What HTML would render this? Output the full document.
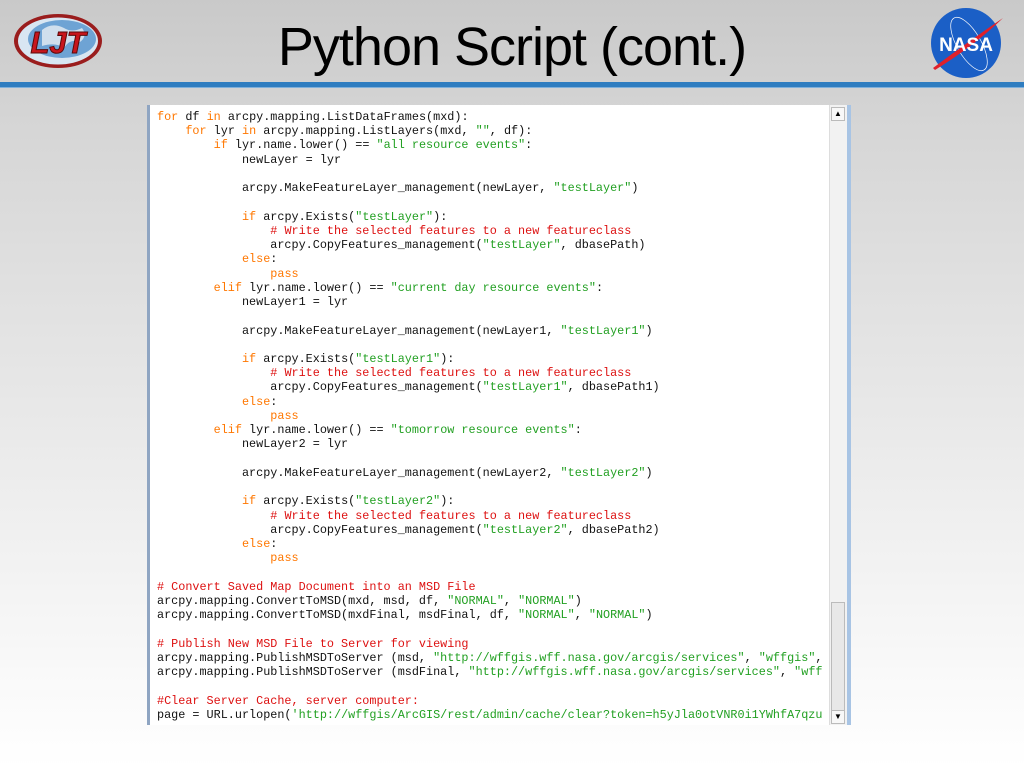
<!DOCTYPE html>
<html><head><meta charset="utf-8"><style>
html,body{margin:0;padding:0}
body{width:1024px;height:768px;position:relative;overflow:hidden;background:linear-gradient(#c9c9c9 0px,#d6d6d6 130px,#eeeeee 500px,#ffffff 768px);font-family:"Liberation Sans",sans-serif}
.title{position:absolute;left:0;width:1024px;top:16px;text-align:center;font-size:54px;color:#000;font-family:"Liberation Sans Narrow","Liberation Sans",sans-serif;letter-spacing:-1px}
.bar{position:absolute;left:0;top:82px;width:1024px;height:5px;background:#2f7dc0;border-bottom:1px solid #7fb0db}
.box{position:absolute;left:147px;top:105px;width:704px;height:620px;background:#fff;border-left:3px solid #8fa5c2;border-right:4px solid #a8c4e4;box-sizing:border-box;overflow:hidden}
pre{position:absolute;left:7px;top:5px;margin:0;font-family:"Liberation Mono",monospace;font-size:11.8px;line-height:14.24px;color:#111;white-space:pre}
.k{color:#ff7700}.s{color:#22a022}.c{color:#dd1111}
.sb{position:absolute;right:0;top:0;width:17px;height:620px;background:#f2f2f2;border-left:1px solid #ddd}
.thumb{position:absolute;left:1px;top:497px;width:14px;height:110px;background:#e8e8e8;border:1px solid #bbb;box-sizing:border-box}
.ar{position:absolute;left:1px;width:14px;height:14px;background:#f8f8f8;border:1px solid #bbb;box-sizing:border-box;font-size:8px;text-align:center;line-height:12px}
</style></head><body>
<svg style="position:absolute;left:12px;top:12px" width="92" height="58" viewBox="0 0 92 58">
<ellipse cx="46" cy="29" rx="44" ry="27" fill="#9a1d1d"/>
<ellipse cx="46" cy="29" rx="40" ry="23.5" fill="#d8e6f2"/>
<ellipse cx="50" cy="27" rx="34" ry="19" fill="#6ea3d4"/>
<path d="M30 18 q10 -8 22 -2 q8 5 18 0 q6 8 -2 14 q-10 -4 -16 6 q-8 -6 -22 -2z" fill="#e9eef2" opacity="0.8"/>
<text x="46" y="41" text-anchor="middle" font-family="Liberation Sans" font-style="italic" font-weight="bold" font-size="31" fill="#c8161d" stroke="#5a0a0a" stroke-width="1">LJT</text>
</svg>
<div class="title">Python Script (cont.)</div>
<svg style="position:absolute;left:929px;top:6px" width="76" height="74" viewBox="0 0 76 74">
<circle cx="37" cy="37" r="35" fill="#1b5fc6"/>
<ellipse cx="40" cy="38" rx="12" ry="30" fill="none" stroke="#fff" stroke-width="0.7" transform="rotate(-30 40 38)"/>
<path d="M4 62 Q40 35 74 12 Q45 40 6 64z" fill="#e0202a"/>
<text x="37" y="45" text-anchor="middle" font-family="Liberation Sans" font-weight="bold" font-size="19" fill="#fff">NASA</text>
</svg>
<div class="bar"></div>
<div class="box">
<pre><span class="k">for</span> df <span class="k">in</span> arcpy.mapping.ListDataFrames(mxd):
    <span class="k">for</span> lyr <span class="k">in</span> arcpy.mapping.ListLayers(mxd, <span class="s">""</span>, df):
        <span class="k">if</span> lyr.name.lower() == <span class="s">"all resource events"</span>:
            newLayer = lyr

            arcpy.MakeFeatureLayer_management(newLayer, <span class="s">"testLayer"</span>)

            <span class="k">if</span> arcpy.Exists(<span class="s">"testLayer"</span>):
                <span class="c"># Write the selected features to a new featureclass</span>
                arcpy.CopyFeatures_management(<span class="s">"testLayer"</span>, dbasePath)
            <span class="k">else</span>:
                <span class="k">pass</span>
        <span class="k">elif</span> lyr.name.lower() == <span class="s">"current day resource events"</span>:
            newLayer1 = lyr

            arcpy.MakeFeatureLayer_management(newLayer1, <span class="s">"testLayer1"</span>)

            <span class="k">if</span> arcpy.Exists(<span class="s">"testLayer1"</span>):
                <span class="c"># Write the selected features to a new featureclass</span>
                arcpy.CopyFeatures_management(<span class="s">"testLayer1"</span>, dbasePath1)
            <span class="k">else</span>:
                <span class="k">pass</span>
        <span class="k">elif</span> lyr.name.lower() == <span class="s">"tomorrow resource events"</span>:
            newLayer2 = lyr

            arcpy.MakeFeatureLayer_management(newLayer2, <span class="s">"testLayer2"</span>)

            <span class="k">if</span> arcpy.Exists(<span class="s">"testLayer2"</span>):
                <span class="c"># Write the selected features to a new featureclass</span>
                arcpy.CopyFeatures_management(<span class="s">"testLayer2"</span>, dbasePath2)
            <span class="k">else</span>:
                <span class="k">pass</span>

<span class="c"># Convert Saved Map Document into an MSD File</span>
arcpy.mapping.ConvertToMSD(mxd, msd, df, <span class="s">"NORMAL"</span>, <span class="s">"NORMAL"</span>)
arcpy.mapping.ConvertToMSD(mxdFinal, msdFinal, df, <span class="s">"NORMAL"</span>, <span class="s">"NORMAL"</span>)

<span class="c"># Publish New MSD File to Server for viewing</span>
arcpy.mapping.PublishMSDToServer (msd, <span class="s">"http://wffgis.wff.nasa.gov/arcgis/services"</span>, <span class="s">"wffgis"</span>,
arcpy.mapping.PublishMSDToServer (msdFinal, <span class="s">"http://wffgis.wff.nasa.gov/arcgis/services"</span>, <span class="s">"wff</span>

<span class="c">#Clear Server Cache, server computer:</span>
page = URL.urlopen(<span class="s">'http://wffgis/ArcGIS/rest/admin/cache/clear?token=h5yJla0otVNR0i1YWhfA7qzu</span></pre>
<div class="sb">
<div class="ar" style="top:2px">▲</div>
<div class="thumb"></div>
<div class="ar" style="top:605px">▼</div>
</div>
</div>
</body></html>
